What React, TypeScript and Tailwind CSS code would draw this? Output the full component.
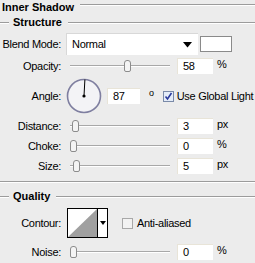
import React from "react";

function Legend({ title, indent }: { title: string; indent?: boolean }) {
  return (
    <div className="flex h-[15px] items-center">
      {indent && <div className="mr-[4px] w-[9px] shrink-0 border-t border-b border-t-[#9c9c9c] border-b-white" />}
      <span className="shrink-0 font-bold leading-none tracking-normal">{title}</span>
      <div className="ml-[6px] flex-1 border-t border-b border-t-[#9c9c9c] border-b-white" />
    </div>
  );
}

function Slider({ pos }: { pos: number }) {
  return (
    <div className="relative ml-[9px] h-[16px] w-[100px] shrink-0">
      <div className="absolute left-0 right-0 top-[7px] border-t border-b border-t-[#a8a8a8] border-b-white" />
      <div
        className="absolute top-[2px] h-[12px] w-[7px] rounded-t-[3px] rounded-b-[2px] border border-[#8c8c8c] bg-[#f4f4f4]"
        style={{ left: pos }}
      />
    </div>
  );
}

function NumInput({ value, w = 36 }: { value: string; w?: number }) {
  return (
    <div
      className="flex h-[16px] shrink-0 items-center border-t border-l border-t-[#e8e4d8] border-l-[#e8e4d8] bg-white pl-[5px] leading-none"
      style={{ width: w }}
    >
      {value}
    </div>
  );
}

function Label({ text }: { text: string }) {
  return <div className="w-[61px] shrink-0 whitespace-nowrap text-right leading-none">{text}</div>;
}

function SliderRow({ label, pos, value, unit }: { label: string; pos: number; value: string; unit: string }) {
  return (
    <div className="flex h-[16px] items-center">
      <Label text={label} />
      <Slider pos={pos} />
      <div className="ml-[7px] shrink-0">
        <NumInput value={value} />
      </div>
      <span className="ml-[4px] -mt-[3px] shrink-0 leading-none">{unit}</span>
    </div>
  );
}

export default function App() {
  return (
    <div
      className="h-[263px] w-[255px] overflow-hidden bg-[#ececec] text-[11px] tracking-[-0.3px] text-black"
      style={{ fontFamily: '"Liberation Sans", Arial, sans-serif' }}
    >
      <div className="flex h-[14px] items-center pl-[2px]">
        <span className="shrink-0 font-bold leading-none tracking-normal">Inner Shadow</span>
        <div className="ml-[6px] -mt-[4px] flex-1 border-t border-b border-t-[#9c9c9c] border-b-white" />
      </div>
      <div className="mt-[1px]">
        <Legend title="Structure" indent />
      </div>

      <div className="mt-[3px] flex h-[22px] items-center">
        <Label text="Blend Mode:" />
        <div className="ml-[5px] flex h-[22px] w-[132px] shrink-0 items-center justify-between border-t border-l border-t-[#d8d8d8] border-l-[#d8d8d8] bg-white pl-[5px] pr-[6px]">
          <span className="leading-none">Normal</span>
          <svg width="9" height="6" viewBox="0 0 9 6">
            <path d="M0 0 H9 L4.5 5.5 Z" fill="#000" />
          </svg>
        </div>
        <div className="ml-[2px] h-[16px] w-[32px] shrink-0 border border-[#8a8a8a] bg-white" />
      </div>

      <div className="mt-[3px]">
        <SliderRow label="Opacity:" pos={54} value="58" unit="%" />
      </div>

      <div className="mt-[4px] flex h-[36px] items-center">
        <Label text="Angle:" />
        <svg className="ml-[5px] shrink-0" width="36" height="36" viewBox="0 0 36 36">
          <circle cx="18" cy="18" r="16.5" fill="#f3f3f6" stroke="#7f7fa0" strokeWidth="1.6" />
          <line x1="18" y1="18" x2="18.9" y2="1.5" stroke="#000" strokeWidth="1" />
          <circle cx="18" cy="18" r="1.6" fill="#000" />
        </svg>
        <div className="ml-[5px] shrink-0">
          <NumInput value="87" w={33} />
        </div>
        <span className="ml-[9px] -mt-[6px] shrink-0 text-[9px] leading-none">o</span>
        <div className="ml-[9px] flex h-[11px] w-[11px] shrink-0 items-center justify-center border border-[#7a8aa8] bg-[#e4ecf8]">
          <svg width="9" height="9" viewBox="0 0 9 9">
            <path d="M1.5 4.5 L3.5 7 L7.5 1" fill="none" stroke="#2a3a9c" strokeWidth="1.6" />
          </svg>
        </div>
        <span className="ml-[3px] shrink-0 whitespace-nowrap leading-none">Use Global Light</span>
      </div>

      <div className="mt-[4px]">
        <SliderRow label="Distance:" pos={2} value="3" unit="px" />
      </div>
      <div className="mt-[4px]">
        <SliderRow label="Choke:" pos={0} value="0" unit="%" />
      </div>
      <div className="mt-[4px]">
        <SliderRow label="Size:" pos={3} value="5" unit="px" />
      </div>

      <div className="mt-[7px] border-t border-b border-t-[#9c9c9c] border-b-white" />

      <div className="mt-[6px]">
        <Legend title="Quality" indent />
      </div>

      <div className="mt-[4px] flex h-[30px] items-center">
        <Label text="Contour:" />
        <div className="ml-[6px] flex h-[30px] w-[41px] shrink-0 border border-black bg-white">
          <svg width="29" height="28" viewBox="0 0 29 28">
            <path d="M0 28 L29 0 V28 Z" fill="#a0a0a0" />
          </svg>
          <div className="flex flex-1 items-center justify-center border-l border-black">
            <svg width="6" height="4" viewBox="0 0 6 4">
              <path d="M0 0 H6 L3 4 Z" fill="#000" />
            </svg>
          </div>
        </div>
        <div className="ml-[14px] h-[11px] w-[11px] shrink-0 border border-[#a8a8a8] bg-[#f2f2f2]" />
        <span className="ml-[4px] shrink-0 whitespace-nowrap leading-none">Anti-aliased</span>
      </div>

      <div className="mt-[6px]">
        <SliderRow label="Noise:" pos={0} value="0" unit="%" />
      </div>
    </div>
  );
}
